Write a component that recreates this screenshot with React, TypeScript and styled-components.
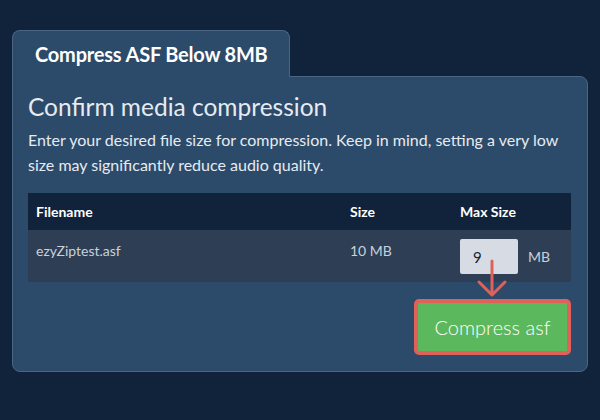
import React, { useState } from 'react';
import styled, { createGlobalStyle } from 'styled-components';

const GlobalStyle = createGlobalStyle`
  html, body {
    margin: 0;
    padding: 0;
    background: #11233a;
  }
  body {
    font-family: Lato, 'Open Sans', sans-serif;
  }
`;

const Page = styled.div`
  width: 600px;
  height: 420px;
  box-sizing: border-box;
  padding: 30px 12px 0 12px;
  background: #11233a;
`;

const Tab = styled.div`
  display: inline-block;
  box-sizing: border-box;
  width: 278px;
  height: 47px;
  padding: 11px 0 0 22px;
  background: #2c4a6a;
  border: 1px solid #4a6584;
  border-bottom: none;
  border-radius: 8px 8px 0 0;
  color: #ffffff;
  font-size: 20px;
  font-weight: 700;
  letter-spacing: -0.2px;
  position: relative;
  z-index: 1;
`;

const Panel = styled.div`
  box-sizing: border-box;
  width: 576px;
  height: 296px;
  margin-top: -1px;
  padding: 15px 15px 0 15px;
  background: #2c4a6a;
  border: 1px solid #4a6584;
  border-radius: 0 8px 8px 8px;
`;

const Heading = styled.h2`
  margin: 0;
  font-size: 24.5px;
  font-weight: 400;
  color: #e6ebf1;
  line-height: 30px;
`;

const Note = styled.p`
  margin: 5px 0 0 0;
  font-size: 16px;
  line-height: 25px;
  color: #e6ebf1;
`;

const Table = styled.div`
  margin-top: 16px;
  width: 543px;
`;

const Row = styled.div<{ header?: boolean }>`
  display: grid;
  grid-template-columns: 314px 110px 1fr;
  align-items: ${({ header }) => (header ? 'center' : 'start')};
  height: ${({ header }) => (header ? '37px' : '52px')};
  padding-left: 8px;
  background: ${({ header }) => (header ? '#11233a' : '#2e3f55')};
  color: ${({ header }) => (header ? '#ffffff' : '#c9d1db')};
  font-size: 14px;
  font-weight: ${({ header }) => (header ? 700 : 400)};
`;

const Cell = styled.div`
  padding-top: 12px;
`;

const SizeCell = styled.div`
  display: flex;
  align-items: center;
  gap: 10px;
  padding-top: 9px;
  position: relative;
`;

const SizeInput = styled.input`
  box-sizing: border-box;
  width: 58px;
  height: 35px;
  border: none;
  border-radius: 2px;
  background: #d7dce4;
  padding: 0 0 0 13px;
  font-family: Lato, sans-serif;
  font-size: 15px;
  color: #1c2533;
  outline: none;
`;

const Unit = styled.span`
  color: #c9d1db;
  font-size: 14px;
`;

const Arrow = styled.svg`
  position: absolute;
  left: 17px;
  top: 31px;
  overflow: visible;
`;

const Actions = styled.div`
  display: flex;
  justify-content: flex-end;
  width: 543px;
  margin-top: 17px;
`;

const CompressButton = styled.button`
  box-sizing: border-box;
  width: 157px;
  height: 56px;
  background: #5cb85c;
  border: 4px solid #e0605a;
  border-radius: 5px;
  color: #ffffff;
  font-family: Lato, sans-serif;
  font-size: 20px;
  font-weight: 300;
  cursor: pointer;
`;

export default function App() {
  const [maxSize, setMaxSize] = useState('9');

  return (
    <Page>
      <GlobalStyle />
      <Tab>Compress ASF Below 8MB</Tab>
      <Panel>
        <Heading>Confirm media compression</Heading>
        <Note>
          Enter your desired file size for compression. Keep in mind, setting a very low size may
          significantly reduce audio quality.
        </Note>
        <Table>
          <Row header>
            <div>Filename</div>
            <div>Size</div>
            <div>Max Size</div>
          </Row>
          <Row>
            <Cell>ezyZiptest.asf</Cell>
            <Cell>10 MB</Cell>
            <SizeCell>
              <SizeInput value={maxSize} onChange={(e) => setMaxSize(e.target.value)} />
              <Unit>MB</Unit>
              <Arrow width="30" height="36" viewBox="0 0 30 36">
                <path
                  d="M15 0 V34 M2 21 L15 34 L28 21"
                  fill="none"
                  stroke="#e0605a"
                  strokeWidth="3"
                  strokeLinecap="round"
                  strokeLinejoin="round"
                />
              </Arrow>
            </SizeCell>
          </Row>
        </Table>
        <Actions>
          <CompressButton>Compress asf</CompressButton>
        </Actions>
      </Panel>
    </Page>
  );
}
